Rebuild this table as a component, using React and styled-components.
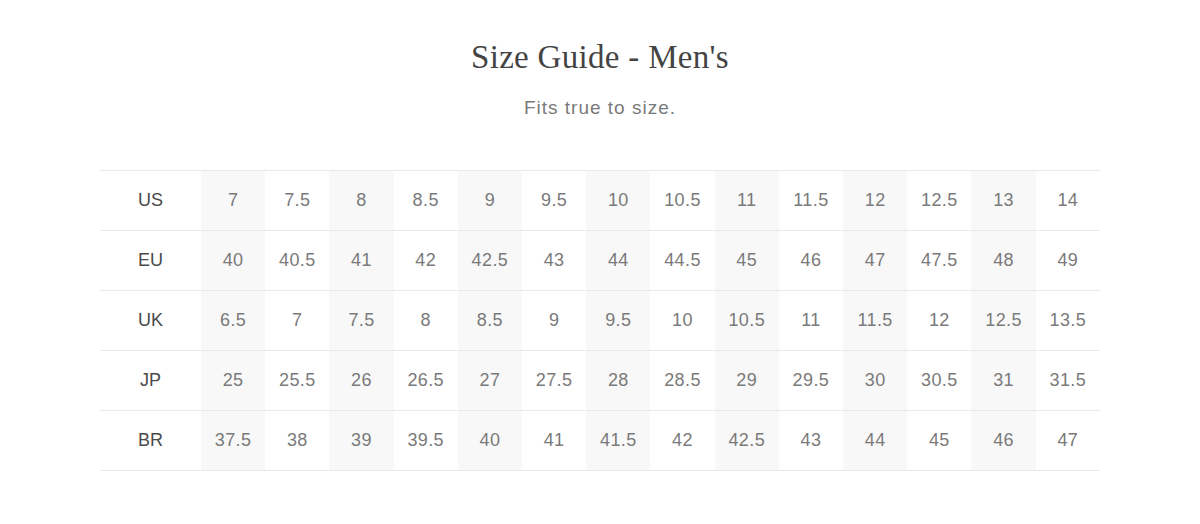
import React from "react";
import styled, { createGlobalStyle } from "styled-components";

const Global = createGlobalStyle`
  html, body { margin: 0; padding: 0; background: #fff; }
  body { font-family: "Liberation Sans", Arial, sans-serif; }
`;

const Page = styled.div`
  width: 1200px;
  padding-top: 36px;
  display: flex;
  flex-direction: column;
  align-items: center;
`;

const Title = styled.h1`
  margin: 0;
  font-family: "Liberation Serif", "Times New Roman", serif;
  font-weight: 400;
  font-size: 33px;
  line-height: 42px;
  color: #444;
  letter-spacing: 0.3px;
`;

const Subtitle = styled.p`
  margin: 18px 0 0;
  font-size: 19px;
  line-height: 24px;
  letter-spacing: 1px;
  color: #7a7a7a;
`;

const Table = styled.table`
  margin-top: 50px;
  width: 1000px;
  border-collapse: collapse;
  table-layout: fixed;
`;

const Row = styled.tr`
  border-top: 1px solid #e9e9e9;
  border-bottom: 1px solid #e9e9e9;
`;

const Label = styled.th`
  width: 101px;
  height: 59px;
  padding: 0;
  font-weight: 400;
  font-size: 18px;
  color: #4a4a4a;
  text-align: center;
`;

const Cell = styled.td`
  height: 59px;
  padding: 0;
  font-size: 18px;
  letter-spacing: 0.4px;
  color: #7a7a7a;
  text-align: center;
  background: ${(p) => (p.$shade ? "#f8f8f8" : "#fff")};
`;

const rows = [
  ["US", ["7", "7.5", "8", "8.5", "9", "9.5", "10", "10.5", "11", "11.5", "12", "12.5", "13", "14"]],
  ["EU", ["40", "40.5", "41", "42", "42.5", "43", "44", "44.5", "45", "46", "47", "47.5", "48", "49"]],
  ["UK", ["6.5", "7", "7.5", "8", "8.5", "9", "9.5", "10", "10.5", "11", "11.5", "12", "12.5", "13.5"]],
  ["JP", ["25", "25.5", "26", "26.5", "27", "27.5", "28", "28.5", "29", "29.5", "30", "30.5", "31", "31.5"]],
  ["BR", ["37.5", "38", "39", "39.5", "40", "41", "41.5", "42", "42.5", "43", "44", "45", "46", "47"]],
];

export default function App() {
  return (
    <>
      <Global />
      <Page>
        <Title>Size Guide - Men's</Title>
        <Subtitle>Fits true to size.</Subtitle>
        <Table>
          <tbody>
            {rows.map(([label, vals]) => (
              <Row key={label}>
                <Label>{label}</Label>
                {vals.map((v, i) => (
                  <Cell key={i} $shade={i % 2 === 0}>
                    {v}
                  </Cell>
                ))}
              </Row>
            ))}
          </tbody>
        </Table>
      </Page>
    </>
  );
}
